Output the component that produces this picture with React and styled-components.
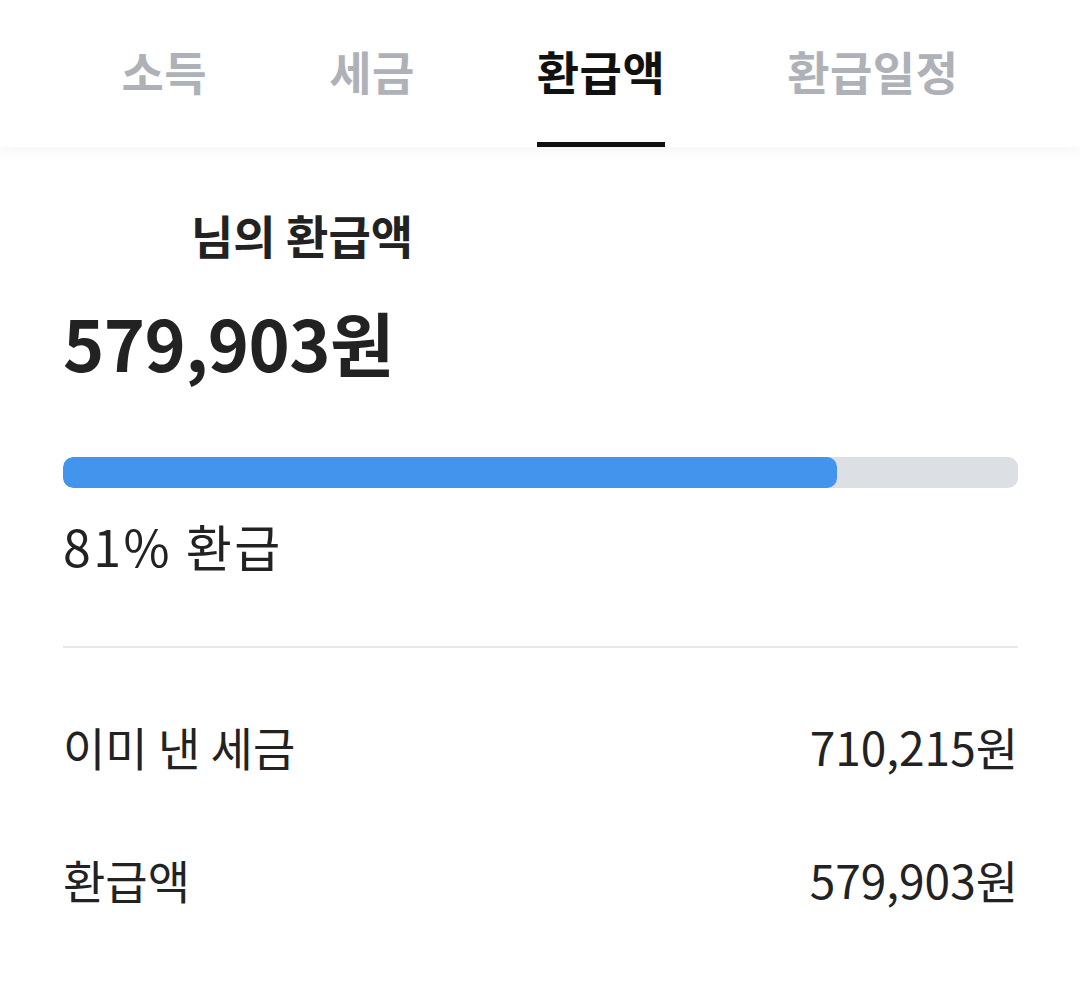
import React from 'react';
import styled, { createGlobalStyle } from 'styled-components';

const GlobalStyle = createGlobalStyle`
  body {
    margin: 0;
    background: #ffffff;
    font-family: "Noto Sans CJK KR", "Noto Sans", sans-serif;
    color: #222222;
  }
`;

const TABS = ['소득', '세금', '환급액', '환급일정'];

const Page = styled.div`
  width: 1080px;
  min-height: 990px;
  background: #ffffff;
`;

const TabBar = styled.nav`
  position: relative;
  z-index: 1;
  display: flex;
  justify-content: center;
  gap: 122px;
  height: 147px;
  background: #ffffff;
  box-shadow: 0 6px 14px rgba(0, 0, 0, 0.035);
`;

const Tab = styled.div`
  display: flex;
  align-items: center;
  box-sizing: border-box;
  height: 100%;
  border-bottom: 5px solid ${(props) => (props.active ? '#111111' : 'transparent')};
  font-size: 46px;
  font-weight: 700;
  letter-spacing: 0.5px;
  line-height: 1.2;
  color: ${(props) => (props.active ? '#111111' : '#aeb2b8')};
`;

const Content = styled.main`
  padding: 0 62px 0 63px;
`;

const Heading = styled.h2`
  margin: 60px 0 0;
  font-size: 46px;
  font-weight: 700;
  line-height: 1.2;
  color: #222222;
`;

const NameBlank = styled.span`
  display: inline-block;
  width: 128px;
`;

const Amount = styled.div`
  margin-top: 38px;
  font-size: 70px;
  font-weight: 700;
  line-height: 1.2;
  letter-spacing: -0.5px;
  color: #222222;
`;

const Track = styled.div`
  margin-top: 73px;
  height: 31px;
  border-radius: 10px;
  background: #dcdfe4;
  overflow: hidden;
`;

const Fill = styled.div`
  height: 100%;
  border-radius: 10px;
  background: #4294ec;
`;

const Percent = styled.div`
  margin-top: 27px;
  font-size: 50px;
  line-height: 1.2;
  letter-spacing: 2.5px;
  color: #222222;
`;

const Divider = styled.hr`
  margin: 71px 0 0;
  border: none;
  height: 2px;
  background: #e8e8e8;
`;

const RowList = styled.div`
  margin-top: 32px;
`;

const Row = styled.div`
  display: flex;
  justify-content: space-between;
  align-items: center;
  height: 133px;
  font-size: 46px;
  line-height: 1.2;
  color: #222222;
`;

const App = () => {
  const refund = 579903;
  const paid = 710215;
  const ratio = Math.floor((refund / paid) * 100);

  return (
    <Page>
      <GlobalStyle />
      <TabBar>
        {TABS.map((t) => (
          <Tab key={t} active={t === '환급액'}>
            {t}
          </Tab>
        ))}
      </TabBar>
      <Content>
        <Heading>
          <NameBlank />
          님의 환급액
        </Heading>
        <Amount>{refund.toLocaleString('ko-KR')}원</Amount>
        <Track>
          <Fill style={{ width: `${ratio}%` }} />
        </Track>
        <Percent>{ratio}% 환급</Percent>
        <Divider />
        <RowList>
          <Row>
            <span>이미 낸 세금</span>
            <span>{paid.toLocaleString('ko-KR')}원</span>
          </Row>
          <Row>
            <span>환급액</span>
            <span>{refund.toLocaleString('ko-KR')}원</span>
          </Row>
        </RowList>
      </Content>
    </Page>
  );
};

export default App;
